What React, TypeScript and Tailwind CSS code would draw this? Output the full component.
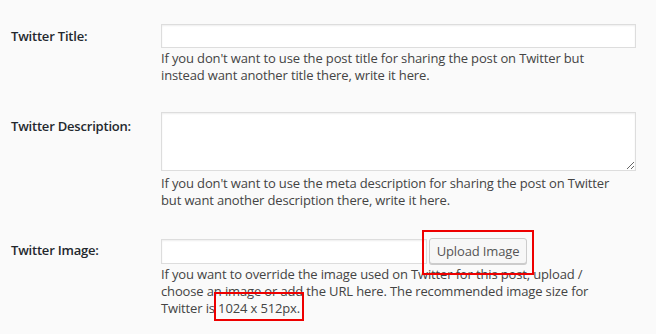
import React from "react";

function Row({
  label,
  labelTop,
  children,
}: {
  label: string;
  labelTop: string;
  children: React.ReactNode;
}) {
  return (
    <div className="flex">
      <div className={`w-[161px] shrink-0 pl-[11px] ${labelTop}`}>
        <span className="text-[13px] font-semibold tracking-[-0.2px] text-[#23282d]">{label}</span>
      </div>
      <div className="w-[475px]">{children}</div>
    </div>
  );
}

export default function App() {
  return (
    <div className="h-[334px] w-[656px] overflow-hidden bg-[#fafafa] font-['Open_Sans',sans-serif] text-[13px] leading-[17px] tracking-[-0.14px] text-[#444]">
      <div className="flex flex-col pt-[24px]">
        <Row label="Twitter Title:" labelTop="pt-[4px]">
          <input
            type="text"
            className="block h-[24px] w-[475px] border border-[#ddd] bg-white shadow-[inset_0_1px_2px_rgba(0,0,0,0.07)] outline-none"
          />
          <p className="mt-[2px] whitespace-nowrap">
            If you don't want to use the post title for sharing the post on Twitter but
            <br />
            instead want another title there, write it here.
          </p>
        </Row>

        <div className="mt-[28px]">
          <Row label="Twitter Description:" labelTop="pt-[6px]">
            <textarea className="block h-[59px] w-[475px] resize-y border border-[#ddd] bg-white shadow-[inset_0_1px_2px_rgba(0,0,0,0.07)] outline-none" />
            <p className="mt-[4px] whitespace-nowrap">
              If you don't want to use the meta description for sharing the post on Twitter
              <br />
              but want another description there, write it here.
            </p>
          </Row>
        </div>

        <div className="mt-[29px]">
          <Row label="Twitter Image:" labelTop="pt-[4px]">
            <div className="flex items-center gap-[2px]">
              <input
                type="text"
                className="block h-[25px] w-[266px] border border-[#ddd] bg-white shadow-[inset_0_1px_2px_rgba(0,0,0,0.07)] outline-none"
              />
              <div className="relative">
                <button className="h-[26px] w-[98px] rounded-[3px] border border-[#ccc] bg-[#f7f7f7] text-[13px] tracking-[-0.14px] text-[#555] shadow-[0_1px_0_#ccc]">
                  Upload Image
                </button>
                <span className="pointer-events-none absolute -top-[8px] -left-[7px] h-[45px] w-[112px] border-2 border-[#e00]" />
              </div>
            </div>
            <p className="mt-[2px] whitespace-nowrap">
              If you want to override the image used on Twitter for this post, upload /
              <br />
              choose an image or add the URL here. The recommended image size for
              <br />
              Twitter is{" "}
              <span className="relative">
                1024 x 512px.
                <span className="pointer-events-none absolute -top-[7px] -bottom-[4px] -left-[4px] -right-[4px] border-2 border-[#e00]" />
              </span>
            </p>
          </Row>
        </div>
      </div>
    </div>
  );
}
